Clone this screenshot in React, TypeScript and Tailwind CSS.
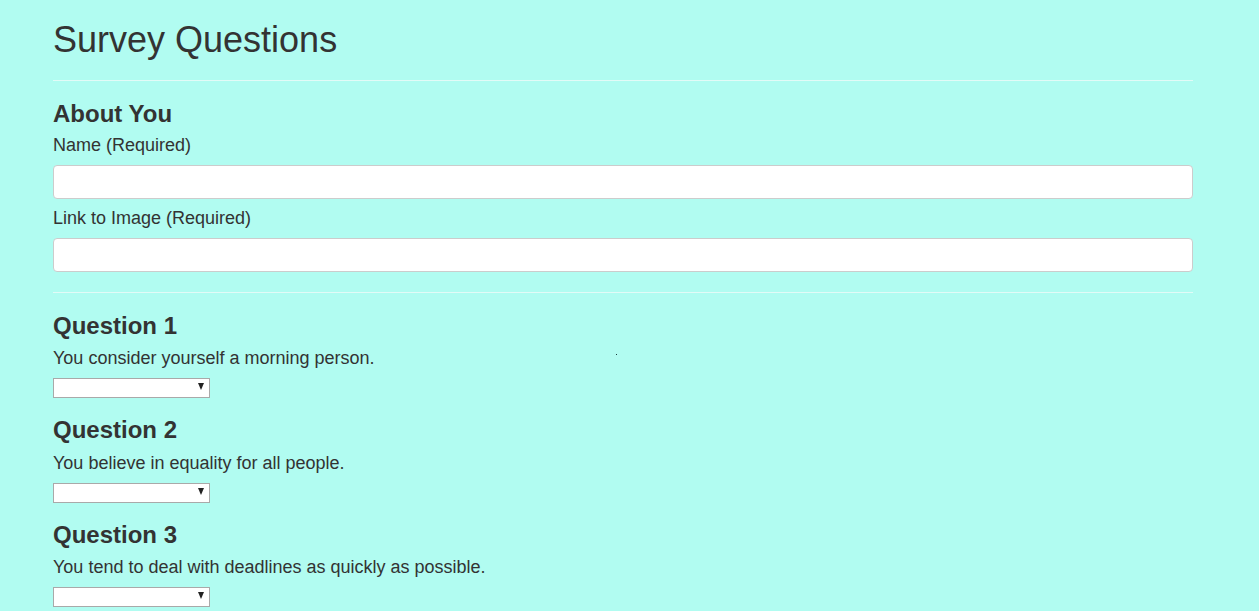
import React from "react";

const questions = [
  "You consider yourself a morning person.",
  "You believe in equality for all people.",
  "You tend to deal with deadlines as quickly as possible.",
];

function Select() {
  return (
    <div className="relative w-[157px] h-[20px]">
      <select className="appearance-none w-full h-full bg-white border border-[#a9a9a9] rounded-none text-[13px] px-1 outline-none">
        <option></option>
      </select>
      <span className="pointer-events-none absolute right-[6px] top-[7px] w-0 h-0 border-l-[3.5px] border-r-[3.5px] border-t-[7px] border-l-transparent border-r-transparent border-t-[#222]" />
    </div>
  );
}

export default function App() {
  return (
    <div
      className="relative min-h-[611px] bg-[#b1fcf1] text-[#333333] overflow-hidden"
      style={{ fontFamily: '"Liberation Sans", Arial, Helvetica, sans-serif' }}
    >
      <div className="w-[1140px] ml-[53px]">
        <h1 className="text-[36px] leading-[39.6px] pt-[20px] font-normal">Survey Questions</h1>
        <hr className="mt-[20px] mb-[20px] border-0 border-t border-[#e2fbf7]" />
        <h3 className="text-[24px] leading-[26.4px] font-bold">About You</h3>
        <div className="text-[18px] leading-[20px] mt-[8px]">Name (Required)</div>
        <div className="mt-[10px] h-[34px] bg-white border border-[#cccccc] rounded-[4px]" />
        <div className="text-[18px] leading-[20px] mt-[9px]">Link to Image (Required)</div>
        <div className="mt-[10px] h-[34px] bg-white border border-[#cccccc] rounded-[4px]" />
        <hr className="mt-[20px] mb-[20px] border-0 border-t border-[#e2fbf7]" />
        {questions.map((q, i) => (
          <div key={i} className={i > 0 ? "mt-[21px]" : ""}>
            <h3 className="text-[24px] leading-[26.4px] font-bold">Question {i + 1}</h3>
            <div className="text-[18px] leading-[20px] mt-[9px]">{q}</div>
            <div className="mt-[8px]">
              <Select />
            </div>
          </div>
        ))}
      </div>
      <div className="absolute left-[616px] top-[354px] w-[1px] h-[1px] bg-[#1a3a3a]" />
    </div>
  );
}
